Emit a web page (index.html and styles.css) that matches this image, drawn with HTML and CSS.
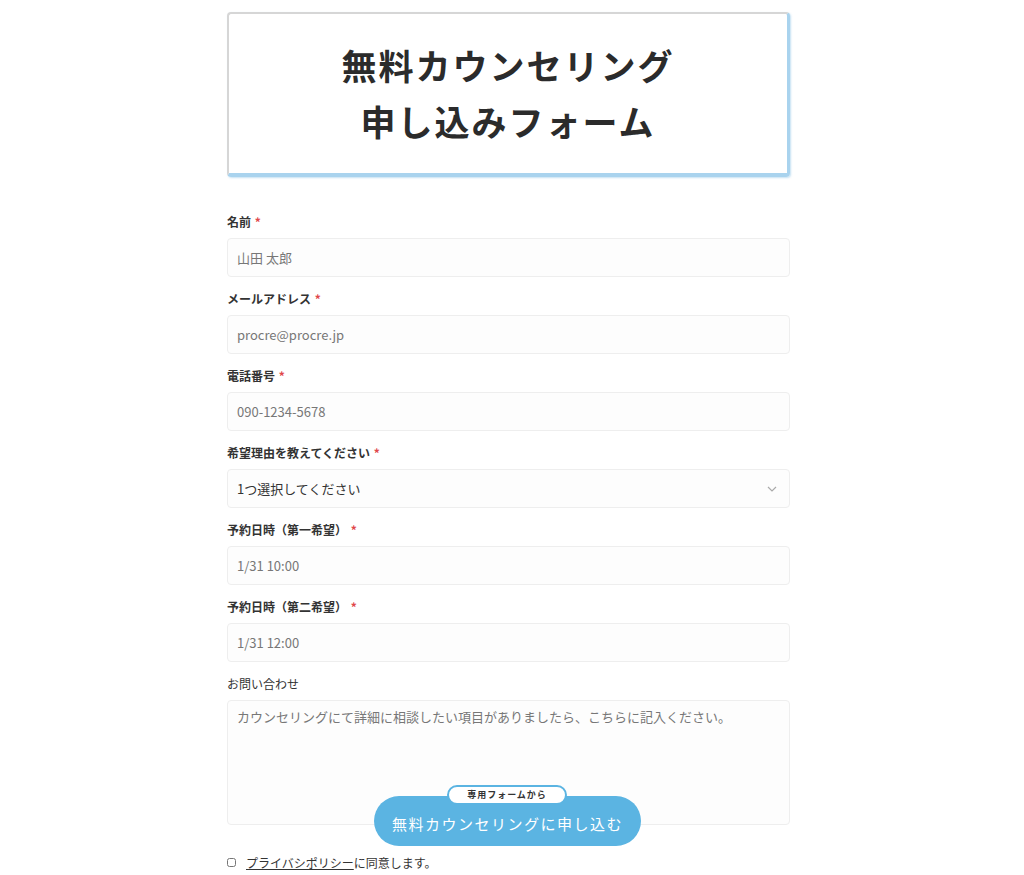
FILE: index.html
```html
<!DOCTYPE html>
<html lang="ja">
<head>
    <meta charset="UTF-8">
    <meta name="viewport" content="width=device-width, initial-scale=1.0">
    <title>無料カウンセリング申し込みフォーム</title>
    <link rel="stylesheet" href="styles.css">
</head>
<body>
    <div class="page">
        <div class="banner">
            <p>無料カウンセリング</p>
            <p>申し込みフォーム</p>
        </div>

        <form class="form">
            <div class="form-group">
                <label>名前 <span class="req">*</span></label>
                <input type="text" placeholder="山田 太郎">
            </div>
            <div class="form-group">
                <label>メールアドレス <span class="req">*</span></label>
                <input type="email" placeholder="procre@procre.jp">
            </div>
            <div class="form-group">
                <label>電話番号 <span class="req">*</span></label>
                <input type="tel" placeholder="090-1234-5678">
            </div>
            <div class="form-group">
                <label>希望理由を教えてください <span class="req">*</span></label>
                <div class="select-wrap">
                    <select>
                        <option>1つ選択してください</option>
                    </select>
                    <svg class="chevron" width="10" height="6" viewBox="0 0 10 6"><path d="M1 1l4 4 4-4" fill="none" stroke="#aaa" stroke-width="1.2"/></svg>
                </div>
            </div>
            <div class="form-group">
                <label>予約日時（第一希望） <span class="req">*</span></label>
                <input type="text" placeholder="1/31 10:00">
            </div>
            <div class="form-group">
                <label>予約日時（第二希望） <span class="req">*</span></label>
                <input type="text" placeholder="1/31 12:00">
            </div>
            <div class="form-group">
                <label class="plain">お問い合わせ</label>
                <textarea placeholder="カウンセリングにて詳細に相談したい項目がありましたら、こちらに記入ください。"></textarea>
            </div>

            <div class="submit-row">
                <button type="submit" class="submit-btn">
                    <span class="badge">専用フォームから</span>
                    無料カウンセリングに申し込む
                </button>
            </div>

            <div class="agree">
                <input type="checkbox" id="agree">
                <span><a href="#">プライバシポリシー</a>に同意します。</span>
            </div>
        </form>
    </div>
</body>
</html>
```

FILE: styles.css
```css
body {
    margin: 0;
    background: #FFF;
    font-family: "Noto Sans CJK JP", "Noto Sans", sans-serif;
    color: #333;
}

.page {
    width: 563px;
    margin-left: 227px;
    padding-top: 12px;
}

.banner {
    box-sizing: border-box;
    height: 165px;
    border: 2px solid #d6d6d6;
    border-right: 3px solid #a9d3ee;
    border-bottom: 4px solid #a9d3ee;
    border-radius: 4px;
    box-shadow: 1px 1px 2px rgba(90, 170, 220, 0.35);
    display: flex;
    flex-direction: column;
    justify-content: center;
    align-items: center;
    padding-bottom: 2px;
}

.banner p {
    margin: 0;
    font-size: 35px;
    font-weight: 700;
    letter-spacing: 2px;
    line-height: 56px;
    color: #2b2b2b;
}

.form {
    margin-top: 36px;
}

.form-group {
    margin-bottom: 13px;
}

.form-group label {
    display: block;
    font-size: 12px;
    font-weight: 700;
    line-height: 17px;
    margin-bottom: 8px;
    color: #333;
}

.form-group label.plain {
    font-weight: 400;
}

.req {
    color: #e0474c;
    margin-left: 1px;
}

input[type="text"],
input[type="email"],
input[type="tel"],
select,
textarea {
    box-sizing: border-box;
    width: 100%;
    height: 39px;
    border: 1px solid #eee;
    border-radius: 4px;
    background: #fdfdfd;
    padding: 0 9px;
    font-family: "Noto Sans CJK JP", "Noto Sans", sans-serif;
    font-size: 13px;
    color: #333;
    outline: none;
}

::placeholder {
    color: #777;
}

.select-wrap {
    position: relative;
}

select {
    appearance: none;
    -webkit-appearance: none;
    color: #333;
}

.chevron {
    position: absolute;
    right: 13px;
    top: 17px;
}

textarea {
    height: 125px;
    padding-top: 6px;
    resize: none;
    display: block;
}

.submit-row {
    display: flex;
    justify-content: center;
    margin-top: -42px;
    position: relative;
    left: -1px;
}

.submit-btn {
    position: relative;
    width: 267px;
    height: 50px;
    border: none;
    border-radius: 25px;
    background: #5bb4e2;
    color: #FFF;
    font-family: "Noto Sans CJK JP", "Noto Sans", sans-serif;
    font-size: 15px;
    letter-spacing: 1.5px;
    padding: 4px 0 0;
    cursor: pointer;
}

.badge {
    position: absolute;
    top: -11px;
    left: 73px;
    box-sizing: border-box;
    width: 120px;
    height: 20px;
    border: 2px solid #5bb4e2;
    border-radius: 10px;
    background: #FFF;
    color: #333;
    font-size: 9px;
    font-weight: 700;
    letter-spacing: 1px;
    line-height: 16px;
    text-align: center;
}

.agree {
    display: flex;
    align-items: center;
    margin-top: 8px;
    font-size: 12px;
    color: #333;
}

.agree input {
    width: 9px;
    height: 9px;
    margin: 0 10px 0 0;
}

.agree a {
    color: #333;
}
```
